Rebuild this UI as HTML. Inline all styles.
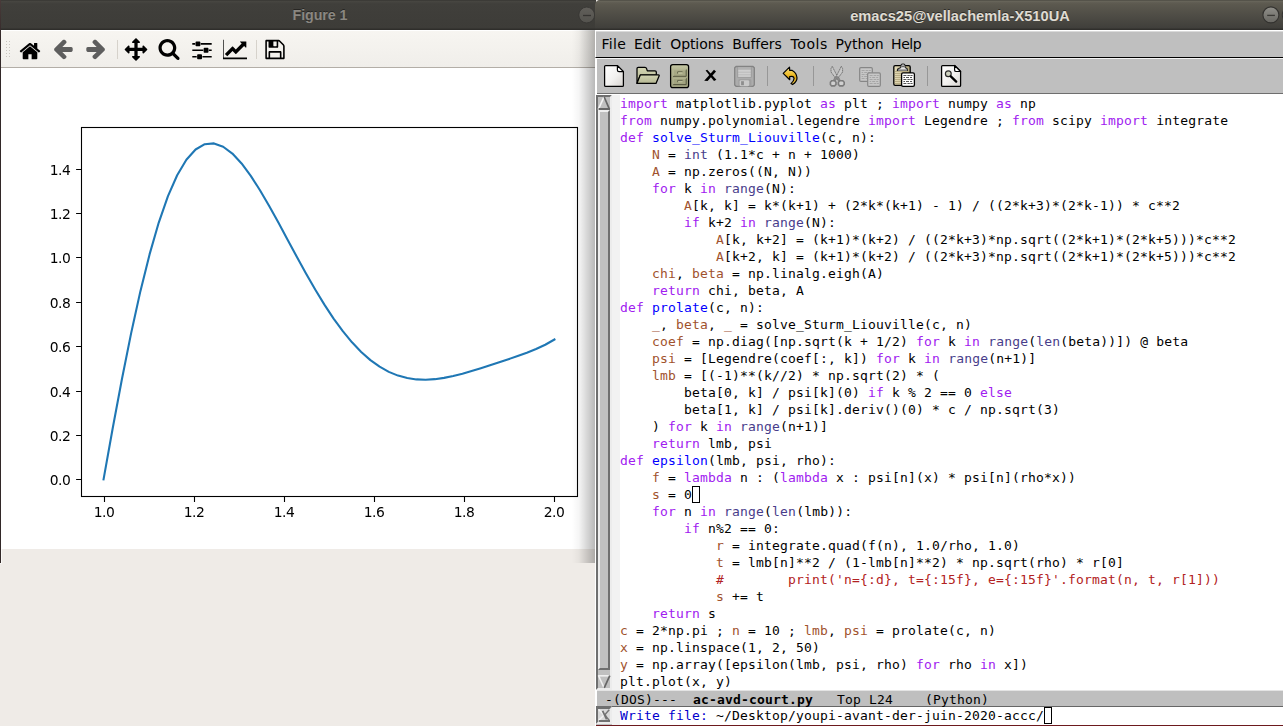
<!DOCTYPE html>
<html><head><meta charset="utf-8"><title>Figure 1 / emacs25</title>
<style>
html,body{margin:0;padding:0}
body{width:1283px;height:726px;overflow:hidden;background:#efebe7;position:relative;font-family:"Liberation Sans",sans-serif}
.abs{position:absolute}
/* ---- Figure window ---- */
#fig-title{left:0;top:0;width:596px;height:30px;background:linear-gradient(#3c3b37 0,#3c3b37 1px,#484742 1px,#45443f 2px,#403f3b 4px,#3d3c38 28px,#2f2e2b 29px,#2f2e2b 30px)}
#fig-title .t{position:absolute;left:0;width:640px;top:6.8px;text-align:center;color:#8a8781;font:bold 14.3px "Liberation Sans",sans-serif;letter-spacing:-0.1px;text-shadow:0 -1px 0 rgba(0,0,0,.4)}
#fig-border{left:0;top:0;width:1px;height:563px;background:linear-gradient(#4a3b3a,#322828 40px)}
#fig-tb{left:1px;top:30px;width:595px;height:37px;background:linear-gradient(#f7f5f1,#f0eeea);border-top:1px solid #fff;box-sizing:border-box}
#fig-tbline{left:1px;top:67px;width:595px;height:1px;background:#b3aea7}
#canvas{left:1px;top:68px;width:595px;height:481px;background:#fff;overflow:hidden}
#plotwrap{left:1px;top:69px;width:594px;height:480px;overflow:hidden}
#plotwrap svg{position:absolute;left:0;top:0;will-change:transform}
#shadow{left:572px;top:30px;width:23px;height:533px;background:linear-gradient(to right,rgba(0,0,0,0),rgba(0,0,0,.04) 30%,rgba(0,0,0,.28))}
/* ---- Emacs window ---- */
#em{left:595px;top:0;width:688px;height:726px}
#em-title{left:0;top:0;width:688px;height:30px;background:linear-gradient(#55534a 0,#55534a 1px,#6b695d 1px,#625f55 2px,#5c594f 4px,#403f3b 28px,#302f2c 29px,#302f2c 30px);border-top-left-radius:5px}
#em-title .t{position:absolute;left:0;width:730px;top:8px;text-align:center;color:#dfdbd2;font:bold 14.67px "Liberation Sans",sans-serif;text-shadow:0 -1px 0 rgba(0,0,0,.45)}
#menubar{left:0;top:30px;width:688px;height:28px;background:#bfbfbf;box-sizing:border-box;border-top:1px solid #fff;border-left:1px solid #fff;border-bottom:1px solid #000;box-shadow:inset 0 1px 0 #dadada}
#menubar span{position:absolute;top:5px;letter-spacing:-0.08px;font:14px "DejaVu Sans","Liberation Sans",sans-serif;color:#000;white-space:pre}
#toolbar{left:0;top:58px;width:688px;height:37px;background:#bfbfbf;box-sizing:border-box;border-top:1px solid #f4f4f4;border-left:2px solid #fff}
#tb-dark{left:2px;top:93px;width:686px;height:1px;background:#6e6e6e}
#tb-light{left:0;top:94px;width:688px;height:1px;background:#fff}
#text{left:0;top:95px;width:688px;height:631px;background:#fff}
#sb{left:1px;top:95px;width:16px;height:595px;background:#c0c0c0}
#fringe{left:17px;top:95px;width:8px;height:595px;background:#f2f2f2}
#code{left:25px;top:95px;width:663px;height:595px;overflow:hidden}
.mono,.ln{font:13px/17px "DejaVu Sans Mono","Liberation Mono",monospace;letter-spacing:0.174px;white-space:pre;color:#000}
.ln{height:17px}
.k{color:#a020f0}.f{color:#0000ff}.v{color:#a0522d}.b{color:#483d8b}.c{color:#b22222}
.cur{display:inline-block;width:6px;height:15px;border:1px solid #000;box-sizing:content-box;vertical-align:top;margin-right:-8px;margin-top:0}
#modeline{left:2px;top:690px;width:686px;height:17px;background:#bfbfbf;box-sizing:border-box;border-top:1px solid #e4e4e4;border-bottom:1px solid #666}
#modeline .mono{position:absolute;left:0;top:-0.5px}
#mini{left:0;top:707px;width:688px;height:19px;background:#fff}
#mini .mono{position:absolute;left:25px;top:0}
#redline{left:1px;top:725px;width:687px;height:1px;background:#6d1a1e}
</style></head><body>
<!-- Figure 1 window -->
<div id="fig-title" class="abs"><div class="t">Figure 1</div></div>
<div id="fig-tb" class="abs"></div>
<svg class="abs" style="left:18px;top:37px" width="24" height="24" viewBox="0 0 72 72"><path fill="#000" d="M57.9 45.9C57.9 45.9 57.9 45.8 57.8 45.7L36 27.7L14.2 45.7C14.2 45.8 14.1 45.9 14.1 45.9L14.1 64.2C14.1 65.5 15.2 66.6 16.6 66.6L31.1 66.6L31.1 52L40.9 52L40.9 66.6L55.4 66.6C56.8 66.6 57.9 65.5 57.9 64.2zM66.3 43.3C66.7 42.8 66.7 42 66.2 41.6L57.9 34.7L57.9 19.2C57.9 18.5 57.3 18 56.6 18L49.4 18C48.7 18 48.1 18.5 48.1 19.2L48.1 26.6L38.9 18.9C37.3 17.6 34.7 17.6 33.1 18.9L5.8 41.6C5.3 42 5.3 42.8 5.7 43.3L8 46.1C8.2 46.4 8.5 46.5 8.8 46.5C9.2 46.6 9.5 46.5 9.7 46.3L36 24.4L62.3 46.3C62.5 46.5 62.7 46.5 63.1 46.5C63.1 46.5 63.1 46.5 63.2 46.5C63.5 46.5 63.8 46.4 64 46.1z"/></svg>
<svg class="abs" style="left:51px;top:37px" width="24" height="24" viewBox="0 0 72 72"><path fill="#5e5e5e" d="M65.1 35C65.1 32.4 63.4 30.2 60.7 30.2L34 30.2L45.1 19C46 18.1 46.6 16.9 46.6 15.6C46.6 14.3 46 13 45.1 12.1L42.3 9.3C41.3 8.4 40.1 7.9 38.8 7.9C37.6 7.9 36.3 8.4 35.4 9.3L10.7 34C9.8 34.9 9.3 36.1 9.3 37.4C9.3 38.7 9.8 40 10.7 40.9L35.4 65.6C36.3 66.5 37.6 67 38.8 67C40.1 67 41.4 66.5 42.3 65.6L45.1 62.7C46 61.8 46.6 60.6 46.6 59.3C46.6 58 46 56.8 45.1 55.9L34 44.7L60.7 44.7C63.4 44.7 65.1 42.4 65.1 39.9z"/></svg>
<svg class="abs" style="left:84px;top:37px" width="24" height="24" viewBox="0 0 72 72"><path fill="#5e5e5e" d="M62.7 37.4C62.7 36.1 62.2 34.9 61.3 34L36.6 9.3C35.7 8.4 34.4 7.9 33.2 7.9C31.9 7.9 30.6 8.4 29.7 9.3L26.9 12.2C26 13 25.4 14.3 25.4 15.6C25.4 16.9 26 18.1 26.9 19L38 30.2L11.3 30.2C8.6 30.2 6.9 32.4 6.9 35L6.9 39.9C6.9 42.4 8.6 44.7 11.3 44.7L38 44.7L26.9 55.8C26 56.8 25.4 58 25.4 59.3C25.4 60.6 26 61.8 26.9 62.7L29.7 65.6C30.6 66.5 31.9 67 33.2 67C34.4 67 35.7 66.5 36.6 65.6L61.3 40.9C62.2 40 62.7 38.7 62.7 37.4"/></svg>
<svg class="abs" style="left:124px;top:37px" width="24" height="24" viewBox="0 0 72 72"><path fill="#000" d="M70 37.4C70 36.8 69.7 36.2 69.3 35.7L59.6 26C59.1 25.6 58.5 25.3 57.9 25.3C56.5 25.3 55.4 26.4 55.4 27.7L55.4 32.6L40.9 32.6L40.9 18L45.7 18C47 18 48.1 16.9 48.1 15.6C48.1 14.9 47.9 14.3 47.4 13.9L37.7 4.2C37.3 3.7 36.6 3.4 36 3.4C35.4 3.4 34.7 3.7 34.3 4.2L24.6 13.9C24.1 14.3 23.9 14.9 23.9 15.6C23.9 16.9 25 18 26.3 18L31.1 18L31.1 32.6L16.6 32.6L16.6 27.7C16.6 26.4 15.5 25.3 14.1 25.3C13.5 25.3 12.9 25.6 12.4 26L2.7 35.7C2.3 36.2 2 36.8 2 37.4C2 38.1 2.3 38.7 2.7 39.2L12.4 48.9C12.9 49.3 13.5 49.6 14.1 49.6C15.5 49.6 16.6 48.5 16.6 47.2L16.6 42.3L31.1 42.3L31.1 56.9L26.3 56.9C25 56.9 23.9 58 23.9 59.3C23.9 59.9 24.1 60.5 24.6 61L34.3 70.7C34.7 71.2 35.4 71.4 36 71.4C36.6 71.4 37.3 71.2 37.7 70.7L47.4 61C47.9 60.5 48.1 59.9 48.1 59.3C48.1 58 47 56.9 45.7 56.9L40.9 56.9L40.9 42.3L55.4 42.3L55.4 47.2C55.4 48.5 56.5 49.6 57.9 49.6C58.5 49.6 59.1 49.3 59.6 48.9L69.3 39.2C69.7 38.7 70 38.1 70 37.4"/></svg>
<svg class="abs" style="left:157px;top:37px" width="24" height="24" viewBox="0 0 72 72"><path fill="#000" d="M48.1 32.6C48.1 42 40.5 49.6 31.1 49.6C21.8 49.6 14.1 42 14.1 32.6C14.1 23.2 21.8 15.6 31.1 15.6C40.5 15.6 48.1 23.2 48.1 32.6M67.6 64.2C67.6 62.9 67 61.6 66.2 60.7L53.2 47.7C56.2 43.3 57.9 38 57.9 32.6C57.9 17.8 45.9 5.9 31.1 5.9C16.4 5.9 4.4 17.8 4.4 32.6C4.4 47.3 16.4 59.3 31.1 59.3C36.5 59.3 41.8 57.7 46.3 54.6L59.3 67.6C60.2 68.5 61.4 69 62.7 69C65.4 69 67.6 66.8 67.6 64.2"/></svg>
<svg class="abs" style="left:190px;top:37px" width="24" height="24" viewBox="0 0 72 72"><path fill="#000" d="M20.2 56.9L6.9 56.9L6.9 61.7L20.2 61.7zM33.6 52L23.9 52C22.5 52 21.4 53.1 21.4 54.4L21.4 64.2C21.4 65.5 22.5 66.6 23.9 66.6L33.6 66.6C34.9 66.6 36 65.5 36 64.2L36 54.4C36 53.1 34.9 52 33.6 52M39.6 37.4L6.9 37.4L6.9 42.3L39.6 42.3zM15.4 18L6.9 18L6.9 22.9L15.4 22.9zM65.1 56.9L37.2 56.9L37.2 61.7L65.1 61.7zM28.7 13.2L19 13.2C17.7 13.2 16.6 14.3 16.6 15.6L16.6 25.3C16.6 26.6 17.7 27.7 19 27.7L28.7 27.7C30 27.7 31.1 26.6 31.1 25.3L31.1 15.6C31.1 14.3 30 13.2 28.7 13.2M53 32.6L43.3 32.6C42 32.6 40.9 33.7 40.9 35L40.9 44.7C40.9 46.1 42 47.2 43.3 47.2L53 47.2C54.3 47.2 55.4 46.1 55.4 44.7L55.4 35C55.4 33.7 54.3 32.6 53 32.6M65.1 37.4L56.6 37.4L56.6 42.3L65.1 42.3zM65.1 18L32.4 18L32.4 22.9L65.1 22.9z"/></svg>
<svg class="abs" style="left:223px;top:37px" width="24" height="24" viewBox="0 0 72 72"><path fill="#000" d="M74.9 61.7L2 61.7L2 8.3L-2.9 8.3L-2.9 66.6L74.9 66.6zM70 14.4C70 13.7 69.5 13.2 68.8 13.2L52.3 13.2C51.2 13.2 50.7 14.4 51.4 15.2L56 19.8L38.4 37.4L29.6 28.6C29.1 28.1 28.3 28.1 27.8 28.6L5.6 50.8L12.9 58.1L28.7 42.3L37.6 51.1C38.1 51.6 38.8 51.6 39.3 51.1L63.3 27.1L67.9 31.7C68.7 32.5 70 31.9 70 30.9z"/></svg>
<svg class="abs" style="left:263px;top:37px" width="24" height="24" viewBox="0 0 72 72"><path fill="#000" d="M21.4 61.7L21.4 47.2L50.6 47.2L50.6 61.7zM55.4 61.7L55.4 45.9C55.4 43.9 53.8 42.3 51.8 42.3L20.2 42.3C18.2 42.3 16.6 43.9 16.6 45.9L16.6 61.7L11.7 61.7L11.7 13.2L16.6 13.2L16.6 28.9C16.6 31 18.2 32.6 20.2 32.6L42.1 32.6C44.1 32.6 45.7 31 45.7 28.9L45.7 13.2C46.5 13.2 48 13.8 48.5 14.3L59.1 25C59.6 25.5 60.3 27 60.3 27.7L60.3 61.7zM40.9 26.5C40.9 27.2 40.3 27.7 39.6 27.7L32.4 27.7C31.7 27.7 31.1 27.2 31.1 26.5L31.1 14.4C31.1 13.7 31.7 13.2 32.4 13.2L39.6 13.2C40.3 13.2 40.9 13.7 40.9 14.4zM65.1 27.7C65.1 25.7 64 22.9 62.6 21.5L51.9 10.9C50.5 9.4 47.7 8.3 45.7 8.3L10.5 8.3C8.5 8.3 6.9 9.9 6.9 11.9L6.9 62.9C6.9 65 8.5 66.6 10.5 66.6L61.5 66.6C63.5 66.6 65.1 65 65.1 62.9z"/></svg>
<div class="abs" style="left:117px;top:40px;width:1px;height:19px;background:#d6d2cb"></div>
<div class="abs" style="left:256px;top:40px;width:1px;height:19px;background:#d6d2cb"></div>
<svg class="abs" style="left:6px;top:41px" width="5" height="18" fill="#c9c5be"><rect x="0" y="0" width="1" height="1"/><rect x="0" y="3" width="1" height="1"/><rect x="0" y="6" width="1" height="1"/><rect x="0" y="9" width="1" height="1"/><rect x="0" y="12" width="1" height="1"/><rect x="0" y="15" width="1" height="1"/><rect x="3" y="0" width="1" height="1"/><rect x="3" y="3" width="1" height="1"/><rect x="3" y="6" width="1" height="1"/><rect x="3" y="9" width="1" height="1"/><rect x="3" y="12" width="1" height="1"/><rect x="3" y="15" width="1" height="1"/></svg>
<div id="fig-tbline" class="abs"></div>
<div id="canvas" class="abs"></div>
<div id="fig-border" class="abs"></div><div class="abs" style="left:1px;top:549px;width:1px;height:14px;background:#faf9f7"></div><div class="abs" style="left:0;top:563px;width:2px;height:1px;background:#f7f5f3"></div>
<svg class="abs" style="left:576px;top:5px" width="20" height="20" viewBox="576 5 20 20"><defs><linearGradient id="gb1" x1="0" y1="0" x2="0" y2="1"><stop offset="0" stop-color="#615f5a"/><stop offset="1" stop-color="#54534e"/></linearGradient></defs><circle cx="586.7" cy="15" r="7.9" fill="url(#gb1)" stroke="#353431" stroke-width=".8"/><path d="M583 15.5H591" stroke="#353431" stroke-width="1.3"/></svg>
<div id="shadow" class="abs"></div>
<!-- Emacs window -->
<div id="em" class="abs">
 <div id="em-title" class="abs"><div class="t">emacs25@vellachemla-X510UA</div></div>
 <svg class="abs" style="left:665px;top:4px" width="23" height="22" viewBox="1260 4 23 22"><defs><linearGradient id="gb2" x1="0" y1="0" x2="0" y2="1"><stop offset="0" stop-color="#908f89"/><stop offset="1" stop-color="#686762"/></linearGradient></defs><circle cx="1270.9" cy="14.9" r="8" fill="url(#gb2)" stroke="#33322f" stroke-width="1.1"/><path d="M1267.2 15.4H1274.9" stroke="#3a3935" stroke-width="1.3"/><circle cx="1290.3" cy="14.9" r="8" fill="url(#gb2)" stroke="#33322f" stroke-width="1.1"/></svg>
 <div id="menubar" class="abs"><span style="left:5.4px;letter-spacing:.35px">File</span><span style="left:38px">Edit</span><span style="left:74.2px">Options</span><span style="left:136.2px">Buffers</span><span style="left:194.6px;letter-spacing:.55px">Tools</span><span style="left:239.5px">Python</span><span style="left:295px;letter-spacing:-.4px">Help</span></div>
 <div id="toolbar" class="abs"><svg class="abs" style="left:-2px;top:-1px" width="688" height="37" viewBox="595 58 688 37">
<defs>
<linearGradient id="gpage" x1="0" y1="0" x2="1" y2="1"><stop offset="0" stop-color="#fff"/><stop offset=".55" stop-color="#f2f1ef"/><stop offset="1" stop-color="#d6d3cf"/></linearGradient>
<linearGradient id="gcab" x1="0" y1="0" x2="0" y2="1"><stop offset="0" stop-color="#c8caa6"/><stop offset=".25" stop-color="#b1b38f"/><stop offset="1" stop-color="#9c9e7c"/></linearGradient>
<linearGradient id="gfold" x1="0" y1="0" x2="0" y2="1"><stop offset="0" stop-color="#d4d6b3"/><stop offset="1" stop-color="#b3b592"/></linearGradient>
<linearGradient id="gundo" x1="0" y1="0" x2="0" y2="1"><stop offset="0" stop-color="#f8df8a"/><stop offset=".4" stop-color="#f0c030"/><stop offset=".6" stop-color="#dda510"/><stop offset="1" stop-color="#f3cf55"/></linearGradient>
<linearGradient id="gclip" x1="0" y1="0" x2="1" y2="0"><stop offset="0" stop-color="#e4dbb8"/><stop offset=".7" stop-color="#cfc49c"/><stop offset="1" stop-color="#a89c72"/></linearGradient>
</defs>
<!-- new -->
<g stroke="#000" stroke-width="1.25" stroke-linejoin="round">
<path d="M605.6 65.6H617.4L623.4 71.6V85.4Q623.4 86.4 622.4 86.4H605.6Q604.6 86.4 604.6 85.4V66.6Q604.6 65.6 605.6 65.6Z" fill="url(#gpage)"/>
<path d="M617.4 65.6V70Q617.4 71.6 619 71.6H623.4Z" fill="#fff" stroke-width="1.2"/>
</g>
<!-- open -->
<g stroke="#000" stroke-width="1.25" stroke-linejoin="round">
<path d="M637 68.6Q637 67.4 638.2 67.4H645Q646.2 67.4 646.6 68.6L647.3 70.9H655Q656.3 70.9 656.3 72.1V75H640.5L637 83.2Z" fill="url(#gfold)"/>
<path d="M640.4 74.8H658.3Q659.6 74.8 659.1 76L656 83.4H636.9Z" fill="url(#gfold)"/>
</g>
<!-- dired cabinet -->
<rect x="670.6" y="64.6" width="18" height="23" rx="2.2" fill="url(#gcab)" stroke="#000" stroke-width="1.25"/>
<g>
<rect x="673" y="69.5" width="13.4" height="7" fill="#a6a884"/><path d="M673 76.3H686.2V69.5" fill="none" stroke="#55573f" stroke-width="1"/><path d="M673.2 76V69.8H686" fill="none" stroke="#b9bb98" stroke-width=".8"/>
<path d="M677.7 73.6V71.8H682.5" fill="none" stroke="#5f6148" stroke-width="1"/><rect x="678.2" y="72.3" width="4.3" height="1.5" fill="#bfc19d"/>
<rect x="673" y="78.2" width="13.4" height="6.6" fill="#a2a480"/><path d="M673 84.6H686.2V78.2" fill="none" stroke="#55573f" stroke-width="1"/><path d="M673.2 84.3V78.5H686" fill="none" stroke="#b3b592" stroke-width=".8"/>
<path d="M677.7 82.2V80.4H682.5" fill="none" stroke="#5f6148" stroke-width="1"/><rect x="678.2" y="80.9" width="4.3" height="1.5" fill="#b9bb98"/>
</g>
<!-- close X -->
<path d="M704.2 80.8L707.6 81L716 71.6L714 69.8Z" fill="#000"/><path d="M705.6 70.6L707.2 69.8L716.4 79.8L714 81Z" fill="#000"/>
<!-- save (disabled) -->
<g>
<path d="M736 66.5H753L754.3 67.8V85L753 86.3H736L734.7 85V67.8Z" fill="#acacac" stroke="#838383" stroke-width="1.3" stroke-linejoin="round"/>
<rect x="737.6" y="67.1" width="13.8" height="10.3" fill="#b2b2b2"/>
<rect x="738.2" y="69.8" width="12.6" height="2" fill="#cfcfcf"/><rect x="738.2" y="72.5" width="12.6" height="2" fill="#cfcfcf"/><rect x="738.2" y="75.2" width="12.6" height="1.8" fill="#cfcfcf"/>
<path d="M737.6 67.1V77.4H751.4V67.1" fill="none" stroke="#9a9a9a" stroke-width=".8"/>
<path d="M738.4 86.2V80.4Q738.4 79.2 739.6 79.2H750.2Q751.4 79.2 751.4 80.4V86.2Z" fill="#9f9f9f"/>
<rect x="739.6" y="80.2" width="9.6" height="6" rx="1.4" fill="#c9c9c9"/>
<rect x="741.1" y="81.2" width="2.8" height="4" fill="#8d8d8d"/>
</g>
<!-- separators -->
<path d="M767.5 66V86M813.5 66V86M927.5 66V86" stroke="#979797" stroke-width="1"/>
<!-- undo -->
<path d="M783.2 73.4L789.5 67.1L789.7 70.4H792.3Q796.6 72.8 797 77.8Q797.2 81.5 792.6 84.6L791 83.6Q794 81 794.1 78.6Q794 76.6 792 76.4L789.7 76.5V79.7Z" fill="url(#gundo)" stroke="#000" stroke-width="1.2" stroke-linejoin="round"/>
<!-- cut (disabled) -->
<g transform="translate(.8 .6)">
<g fill="#c8c8c8" stroke="#777" stroke-width="1" stroke-linejoin="round" stroke-dasharray="1.6 .4">
<path d="M831.5 65.6L830.2 68V71.4L835.4 78.4L837.4 77.4L832.4 67.6Z"/>
<path d="M840.5 65.6L841.8 68V71.4L836.6 78.4L834.6 77.4L839.6 67.6Z"/>
</g>
<path d="M834.4 76.2L837.6 76.2L839.4 79.8L837.8 80.4L836 77.8L834.2 80.4L832.6 79.8Z" fill="#8c8c8c" stroke="#7a7a7a" stroke-width=".8"/>
<g fill="#d0d0d0" stroke="#7b7b7b" stroke-width="1.6">
<path d="M830.8 80.1H833.8L835.2 81.6V83.9L833.8 85.3H830.8L829.6 83.9V81.6Z"/>
<path d="M838.9 80.1H842L843.4 81.6V83.9L842 85.3H838.9L837.6 83.9V81.6Z"/>
</g>
</g>
<!-- copy (disabled) -->
<g>
<rect x="859.7" y="67.6" width="12.6" height="13.8" rx="1.2" fill="#c7c7c7" stroke="#868686" stroke-width="1.2"/>
<g fill="#a6a6a6"><rect x="861.6" y="70.0" width="3" height="1"/><rect x="865.6" y="70.0" width="2.4" height="1"/><rect x="868.6" y="70.0" width="2.2" height="1"/><rect x="861.6" y="72.0" width="1.6" height="1"/><rect x="864.2" y="72.0" width="3" height="1"/><rect x="868.2" y="72.0" width="2" height="1"/><rect x="861.6" y="74.0" width="3" height="1"/><rect x="865.6" y="74.0" width="2.4" height="1"/><rect x="868.6" y="74.0" width="2.2" height="1"/><rect x="861.6" y="76.0" width="1.6" height="1"/><rect x="864.2" y="76.0" width="3" height="1"/><rect x="868.2" y="76.0" width="2" height="1"/><rect x="861.6" y="78.0" width="3" height="1"/><rect x="865.6" y="78.0" width="2.4" height="1"/><rect x="868.6" y="78.0" width="2.2" height="1"/></g>
<rect x="867.7" y="72.8" width="12.6" height="13.6" rx="1.2" fill="#c7c7c7" stroke="#868686" stroke-width="1.2"/>
<g fill="#a6a6a6"><rect x="869.6" y="75.0" width="3" height="1"/><rect x="873.6" y="75.0" width="2.4" height="1"/><rect x="876.6" y="75.0" width="2.2" height="1"/><rect x="869.6" y="77.0" width="1.6" height="1"/><rect x="872.2" y="77.0" width="3" height="1"/><rect x="876.2" y="77.0" width="2" height="1"/><rect x="869.6" y="79.0" width="3" height="1"/><rect x="873.6" y="79.0" width="2.4" height="1"/><rect x="876.6" y="79.0" width="2.2" height="1"/><rect x="869.6" y="81.0" width="1.6" height="1"/><rect x="872.2" y="81.0" width="3" height="1"/><rect x="876.2" y="81.0" width="2" height="1"/><rect x="869.6" y="83.0" width="3" height="1"/><rect x="873.6" y="83.0" width="2.4" height="1"/><rect x="876.6" y="83.0" width="2.2" height="1"/></g>
</g>
<!-- paste -->
<g>
<rect x="893.8" y="65.7" width="16.4" height="19.6" rx="1.4" fill="url(#gclip)" stroke="#000" stroke-width="1.3"/>
<path d="M895 71.5H909M895 73.5H909M895 75.5H909M895 77.5H909M895 79.5H909M895 81.5H909M895 83.5H909" stroke="#b3a880" stroke-width=".9"/>
<path d="M897.3 70.4Q897.3 69 898.6 68.6L900.4 67.8Q901 67.4 901 66.4V65.4Q901 64 902.6 64H903.4Q905 64 905 65.4V66.4Q905 67.4 905.6 67.8L907 68.6Q907.4 69 907.4 70.4Z" fill="#e2e2e2" stroke="#1e1e1e" stroke-width="1.1" stroke-linejoin="round"/>
<path d="M898 70.3H907" stroke="#8f8f8f" stroke-width="1.1"/>
<rect x="902.2" y="65.6" width="1.6" height="1.6" fill="#4a4a4a"/>
<rect x="901.6" y="72.9" width="12.8" height="13.4" rx="1.4" fill="#fff" stroke="#000" stroke-width="1.3"/>
<g fill="#555"><rect x="903.4" y="75.0" width="3" height="1"/><rect x="907.4" y="75.0" width="2.4" height="1"/><rect x="910.4" y="75.0" width="2.2" height="1"/><rect x="903.4" y="77.0" width="1.6" height="1"/><rect x="906.0" y="77.0" width="3" height="1"/><rect x="910.0" y="77.0" width="2" height="1"/><rect x="903.4" y="79.0" width="3" height="1"/><rect x="907.4" y="79.0" width="2.4" height="1"/><rect x="910.4" y="79.0" width="2.2" height="1"/><rect x="903.4" y="81.0" width="1.6" height="1"/><rect x="906.0" y="81.0" width="3" height="1"/><rect x="910.0" y="81.0" width="2" height="1"/><rect x="903.4" y="83.0" width="3" height="1"/><rect x="907.4" y="83.0" width="2.4" height="1"/><rect x="910.4" y="83.0" width="2.2" height="1"/></g>
</g>
<!-- search -->
<g stroke="#000" stroke-width="1.25" stroke-linejoin="round">
<path d="M942.6 65.5H954.6L960.6 71.5V85.4Q960.6 86.4 959.6 86.4H942.6Q941.6 86.4 941.6 85.4V66.5Q941.6 65.5 942.6 65.5Z" fill="url(#gpage)"/>
<path d="M954.6 65.5V69.9Q954.6 71.5 956.2 71.5H960.6Z" fill="#fff" stroke-width="1.2"/>
</g>
<circle cx="948.3" cy="73.8" r="2.9" fill="#cfd2c0" stroke="#2a2a2a" stroke-width="1.2"/>
<path d="M950.8 76.4L956.2 81.6" stroke="#000" stroke-width="2.3" stroke-linecap="round"/>
</svg>
</div>
 <div id="tb-dark" class="abs"></div><div id="tb-light" class="abs"></div>
 <div id="text" class="abs"></div>
 <div id="sb" class="abs"><svg class="abs" style="left:0;top:0" width="16" height="595" viewBox="596 95 16 595">
<rect x="596" y="95" width="16" height="595" fill="#c0c0c0"/>
<!-- trough bevel -->
<path d="M596 95H612L610 97H598V688L596 690Z" fill="#6f6f6f"/>
<path d="M612 95V690H596L598 688H610V97Z" fill="#ececec"/>
<!-- up arrow -->
<path d="M604 97L598.2 109.6" stroke="#f4f4f4" stroke-width="1.6"/>
<path d="M604.2 97L609.4 109.2" stroke="#666" stroke-width="1.7"/>
<path d="M598.6 109H610" stroke="#666" stroke-width="2"/>
<!-- thumb -->
<rect x="598" y="110" width="12" height="560" fill="#c0c0c0"/>
<path d="M598 110H610L608 112H600V668L598 670Z" fill="#eeeeee"/>
<path d="M610 110V670H598L600 668H608V112Z" fill="#6f6f6f"/>
<!-- down arrow -->
<path d="M598.2 675.8H609.6" stroke="#f0f0f0" stroke-width="1.6"/>
<path d="M598.4 675.4L604 687.8" stroke="#f0f0f0" stroke-width="1.5"/>
<path d="M609.8 675.6L604.2 687.8" stroke="#666" stroke-width="1.7"/>
</svg>
</div>
 <div id="fringe" class="abs"></div>
 <div id="code" class="abs">
<div class="ln"><span class="k">import</span> matplotlib.pyplot <span class="k">as</span> plt ; <span class="k">import</span> numpy <span class="k">as</span> np</div>
<div class="ln"><span class="k">from</span> numpy.polynomial.legendre <span class="k">import</span> Legendre ; <span class="k">from</span> scipy <span class="k">import</span> integrate</div>
<div class="ln"><span class="k">def</span> <span class="f">solve_Sturm_Liouville</span>(c, n):</div>
<div class="ln">    <span class="v">N</span> = <span class="b">int</span> (1.1*c + n + 1000)</div>
<div class="ln">    <span class="v">A</span> = np.zeros((N, N))</div>
<div class="ln">    <span class="k">for</span> k <span class="k">in</span> <span class="b">range</span>(N):</div>
<div class="ln">        <span class="v">A</span>[k, k] = k*(k+1) + (2*k*(k+1) - 1) / ((2*k+3)*(2*k-1)) * c**2</div>
<div class="ln">        <span class="k">if</span> k+2 <span class="k">in</span> <span class="b">range</span>(N):</div>
<div class="ln">            <span class="v">A</span>[k, k+2] = (k+1)*(k+2) / ((2*k+3)*np.sqrt((2*k+1)*(2*k+5)))*c**2</div>
<div class="ln">            <span class="v">A</span>[k+2, k] = (k+1)*(k+2) / ((2*k+3)*np.sqrt((2*k+1)*(2*k+5)))*c**2</div>
<div class="ln">    <span class="v">chi</span>, <span class="v">beta</span> = np.linalg.eigh(A)</div>
<div class="ln">    <span class="k">return</span> chi, beta, A</div>
<div class="ln"><span class="k">def</span> <span class="f">prolate</span>(c, n):</div>
<div class="ln">    <span class="v">_</span>, <span class="v">beta</span>, <span class="v">_</span> = solve_Sturm_Liouville(c, n)</div>
<div class="ln">    <span class="v">coef</span> = np.diag([np.sqrt(k + 1/2) <span class="k">for</span> k <span class="k">in</span> <span class="b">range</span>(<span class="b">len</span>(beta))]) @ beta</div>
<div class="ln">    <span class="v">psi</span> = [Legendre(coef[:, k]) <span class="k">for</span> k <span class="k">in</span> <span class="b">range</span>(n+1)]</div>
<div class="ln">    <span class="v">lmb</span> = [(-1)**(k//2) * np.sqrt(2) * (</div>
<div class="ln">        beta[0, k] / psi[k](0) <span class="k">if</span> k % 2 == 0 <span class="k">else</span></div>
<div class="ln">        beta[1, k] / psi[k].deriv()(0) * c / np.sqrt(3)</div>
<div class="ln">    ) <span class="k">for</span> k <span class="k">in</span> <span class="b">range</span>(n+1)]</div>
<div class="ln">    <span class="k">return</span> lmb, psi</div>
<div class="ln"><span class="k">def</span> <span class="f">epsilon</span>(lmb, psi, rho):</div>
<div class="ln">    <span class="v">f</span> = <span class="k">lambda</span> n : (<span class="k">lambda</span> x : psi[n](x) * psi[n](rho*x))</div>
<div class="ln">    <span class="v">s</span> = 0<i class="cur"></i></div>
<div class="ln">    <span class="k">for</span> n <span class="k">in</span> <span class="b">range</span>(<span class="b">len</span>(lmb)):</div>
<div class="ln">        <span class="k">if</span> n%2 == 0:</div>
<div class="ln">            <span class="v">r</span> = integrate.quad(f(n), 1.0/rho, 1.0)</div>
<div class="ln">            <span class="v">t</span> = lmb[n]**2 / (1-lmb[n]**2) * np.sqrt(rho) * r[0]</div>
<div class="ln">            <span class="c">#        print('n={:d}, t={:15f}, e={:15f}'.format(n, t, r[1]))</span></div>
<div class="ln">            <span class="v">s</span> += t</div>
<div class="ln">    <span class="k">return</span> s</div>
<div class="ln"><span class="v">c</span> = 2*np.pi ; <span class="v">n</span> = 10 ; <span class="v">lmb</span>, <span class="v">psi</span> = prolate(c, n)</div>
<div class="ln"><span class="v">x</span> = np.linspace(1, 2, 50)</div>
<div class="ln"><span class="v">y</span> = np.array([epsilon(lmb, psi, rho) <span class="k">for</span> rho <span class="k">in</span> x])</div>
<div class="ln">plt.plot(x, y)</div>
 </div>
 <div id="modeline" class="abs"><div class="mono"> -(DOS)---  <b>ac-avd-court.py</b>   Top L24    (Python)</div></div>
 <div id="mini" class="abs"><svg class="abs" style="left:1px;top:-1px" width="24" height="20" viewBox="596 706 24 20">
<rect x="612" y="707" width="8" height="18" fill="#f2f2f2"/>
<rect x="596" y="706" width="16" height="19" fill="#c0c0c0"/>
<path d="M596 706H612L609.5 709H598V722L596 724Z" fill="#6f6f6f"/>
<path d="M612 707V724H596L598 722H610V709Z" fill="#ececec"/>
<rect x="598" y="709" width="12" height="13" fill="#d8d8d8"/>
<path d="M598.6 709.6L604 715L598.6 720.4" stroke="#f2f2f2" stroke-width="1.4" fill="none"/>
<path d="M609.2 709.8L605 714.6Q606.6 717.8 609.2 720.2" stroke="#777" stroke-width="1.5" fill="none"/>
<path d="M602.6 710.8L606.6 719.4" stroke="#707070" stroke-width="1.7"/>
<path d="M598.8 721H610" stroke="#666" stroke-width="1.8"/>
</svg>
<div class="mono"><span style="color:#0000cd">Write file: </span>~/Desktop/youpi-avant-der-juin-2020-accc/<i class="cur"></i></div></div>
 <div id="redline" class="abs"></div>
</div>
<!-- plot canvas content (own layer so labels are grayscale-antialiased like Agg) -->
<div id="plotwrap" class="abs">
<svg class="plot" width="594" height="480" viewBox="0 0 594 480">
<polyline points="102.55,410.40 111.75,359.05 120.95,309.95 130.15,264.13 139.35,222.40 148.56,185.40 157.76,153.56 166.96,127.14 176.16,106.22 185.37,90.73 194.57,80.49 203.77,75.17 212.97,74.40 222.17,77.71 231.38,84.58 240.58,94.49 249.78,106.87 258.98,121.20 268.19,136.93 277.39,153.57 286.59,170.65 295.79,187.74 304.99,204.47 314.20,220.53 323.40,235.63 332.60,249.56 341.80,262.17 351.01,273.33 360.21,282.98 369.41,291.10 378.61,297.70 387.81,302.84 397.02,306.60 406.22,309.08 415.42,310.41 424.62,310.72 433.83,310.16 443.03,308.87 452.23,307.01 461.43,304.70 470.63,302.08 479.84,299.25 489.04,296.29 498.24,293.27 507.44,290.20 516.65,287.04 525.85,283.70 535.05,280.03 544.25,275.76 553.45,270.49" fill="none" stroke="#1f77b4" stroke-width="2.08" stroke-linejoin="round" stroke-linecap="square"/>
<rect x="80.5" y="58.5" width="496" height="369" fill="none" stroke="#000" stroke-width="1.1"/>
<path d="M103.5 428v4.9 M193.5 428v4.9 M283.5 428v4.9 M373.5 428v4.9 M463.5 428v4.9 M553.5 428v4.9 M80 410.5h-4.9 M80 366.5h-4.9 M80 322.5h-4.9 M80 277.5h-4.9 M80 233.5h-4.9 M80 188.5h-4.9 M80 144.5h-4.9 M80 100.5h-4.9" stroke="#000" stroke-width="1.1" fill="none"/>
<g font-family="'DejaVu Sans', 'Liberation Sans', sans-serif" font-size="13.889px" fill="#000" letter-spacing="-0.5">
<text x="103.0" y="448.2" text-anchor="middle">1.0</text>
<text x="193.0" y="448.2" text-anchor="middle">1.2</text>
<text x="283.0" y="448.2" text-anchor="middle">1.4</text>
<text x="373.0" y="448.2" text-anchor="middle">1.6</text>
<text x="463.0" y="448.2" text-anchor="middle">1.8</text>
<text x="553.0" y="448.2" text-anchor="middle">2.0</text>
<text x="69.3" y="415.8" text-anchor="end">0.0</text>
<text x="69.3" y="371.8" text-anchor="end">0.2</text>
<text x="69.3" y="327.8" text-anchor="end">0.4</text>
<text x="69.3" y="282.8" text-anchor="end">0.6</text>
<text x="69.3" y="238.8" text-anchor="end">0.8</text>
<text x="69.3" y="193.8" text-anchor="end">1.0</text>
<text x="69.3" y="149.8" text-anchor="end">1.2</text>
<text x="69.3" y="105.8" text-anchor="end">1.4</text>
</g></svg>
</div>
</body></html>
